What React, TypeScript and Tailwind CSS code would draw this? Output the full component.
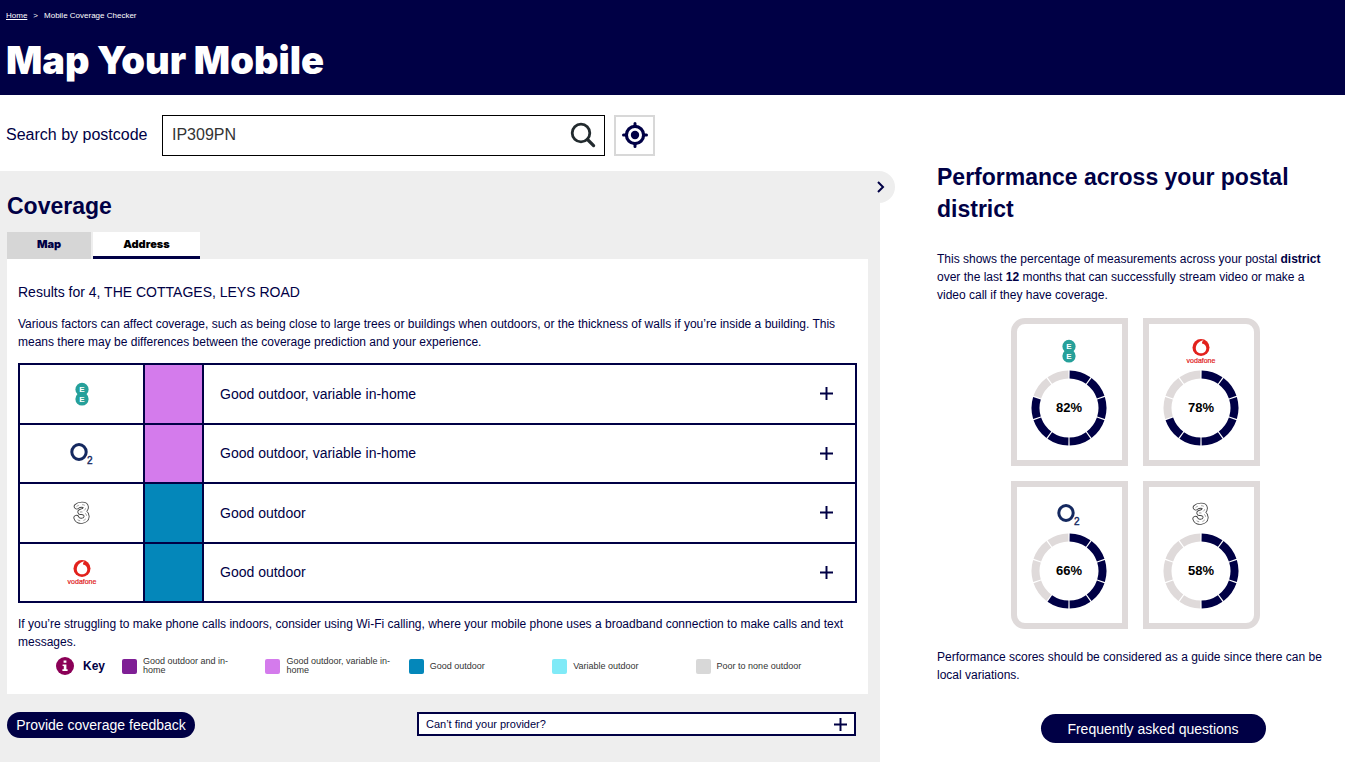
import type { ReactNode } from 'react';
import { clsx } from 'clsx';

type ProviderId = 'ee' | 'o2' | 'three' | 'vodafone';
type Level = 'indoor' | 'variableHome' | 'outdoor' | 'variableOutdoor' | 'poor';

const LEVEL_COLOURS: Record<Level, string> = {
  indoor: 'bg-[#7f1f95]',
  variableHome: 'bg-[#d47bec]',
  outdoor: 'bg-[#0487ba]',
  variableOutdoor: 'bg-[#80eaf7]',
  poor: 'bg-[#d8d8d8]',
};

const RESULTS: { provider: ProviderId; level: Level; label: string }[] = [
  { provider: 'ee', level: 'variableHome', label: 'Good outdoor, variable in-home' },
  { provider: 'o2', level: 'variableHome', label: 'Good outdoor, variable in-home' },
  { provider: 'three', level: 'outdoor', label: 'Good outdoor' },
  { provider: 'vodafone', level: 'outdoor', label: 'Good outdoor' },
];

const KEY_ITEMS: { level: Level; label: string }[] = [
  { level: 'indoor', label: 'Good outdoor and in-home' },
  { level: 'variableHome', label: 'Good outdoor, variable in-home' },
  { level: 'outdoor', label: 'Good outdoor' },
  { level: 'variableOutdoor', label: 'Variable outdoor' },
  { level: 'poor', label: 'Poor to none outdoor' },
];

const SCORES: { provider: ProviderId; percent: number; corner: string }[] = [
  { provider: 'ee', percent: 82, corner: 'rounded-tl-[14px]' },
  { provider: 'vodafone', percent: 78, corner: 'rounded-tr-[14px]' },
  { provider: 'o2', percent: 66, corner: 'rounded-bl-[14px]' },
  { provider: 'three', percent: 58, corner: 'rounded-br-[14px]' },
];

const THREE_PATH = 'M9.8 6.4 C12 4.2 18.6 3.8 18.8 7 C18.9 10 16.5 11.2 13.4 12 C17.2 11.6 19.8 13.6 19.6 16.6 C19.4 21.6 10.6 22.4 9.4 17.8';

function ProviderLogo({ provider }: { provider: ProviderId }) {
  switch (provider) {
    case 'ee':
      return (
        <svg width="30" height="26" viewBox="0 0 30 26" role="img" aria-label="EE">
          <circle cx="15" cy="8.4" r="6.6" fill="#26a09a" />
          <circle cx="15" cy="18" r="6.6" fill="#26a09a" />
          <text x="15" y="11" textAnchor="middle" fontSize="8" fontWeight="700" fill="#fff">E</text>
          <text x="15" y="21" textAnchor="middle" fontSize="8" fontWeight="700" fill="#fff">E</text>
        </svg>
      );
    case 'o2':
      return (
        <svg width="30" height="26" viewBox="0 0 30 26" role="img" aria-label="O2">
          <ellipse cx="12" cy="12" rx="7.2" ry="7.4" fill="none" stroke="#14285f" strokeWidth="3" />
          <text x="20" y="24" fontSize="10" fill="#14285f" stroke="#14285f" strokeWidth="0.4">2</text>
        </svg>
      );
    case 'three':
      return (
        <svg width="30" height="26" viewBox="0 0 30 26" role="img" aria-label="Three" fill="none" strokeLinecap="round" strokeLinejoin="round">
          <path d={THREE_PATH} stroke="#444" strokeWidth="6" />
          <path d={THREE_PATH} stroke="#fff" strokeWidth="4.2" />
          <path d={THREE_PATH} stroke="#888" strokeWidth="0.8" strokeDasharray="2 4" />
        </svg>
      );
    case 'vodafone':
      return (
        <svg width="30" height="26" viewBox="0 0 30 26" role="img" aria-label="Vodafone">
          <circle cx="15" cy="9.5" r="8.5" fill="#e2211c" />
          <path d="M17.8 2.2 C14 2.4 9.8 5.8 9.8 10.2 C9.8 13.2 12.2 15.2 15.1 15.2 C18 15.2 20.3 13.2 20.3 10.2 C20.3 7.4 18.4 6 16 5.4 C15.9 4 16.6 2.8 17.8 2.2 Z" fill="#fff" />
          <text x="15" y="25" textAnchor="middle" fontSize="7" fill="#e2211c" stroke="#e2211c" strokeWidth="0.2">vodafone</text>
        </svg>
      );
  }
}

function PlusIcon({ size = 13 }: { size?: number }) {
  return (
    <svg width={size} height={size} viewBox="0 0 12 12" stroke="#000045" strokeWidth="1.8" aria-hidden="true">
      <path d="M6 0V12M0 6H12" />
    </svg>
  );
}

function ScoreRing({ percent }: { percent: number }) {
  const filled = Math.floor(percent / 10);
  const point = (angle: number) => {
    const rad = ((angle - 90) * Math.PI) / 180;
    return `${38 + 33.5 * Math.cos(rad)} ${38 + 33.5 * Math.sin(rad)}`;
  };
  return (
    <svg width="76" height="76" viewBox="0 0 76 76" fill="none" role="img" aria-label={`${percent}%`}>
      {Array.from({ length: 10 }, (_, i) => (
        <path
          key={i}
          d={`M${point(i * 36 + 1)} A33.5 33.5 0 0 1 ${point(i * 36 + 35)}`}
          stroke={i < filled ? '#000045' : '#dfdada'}
          strokeWidth="8"
        />
      ))}
      <text x="38" y="42" textAnchor="middle" fontSize="13" fontWeight="700" fill="#000">{percent}%</text>
    </svg>
  );
}

function PillButton({ className, children }: { className?: string; children: ReactNode }) {
  return (
    <button type="button" className={clsx('rounded-full bg-[#000045] text-sm text-white', className)}>
      {children}
    </button>
  );
}

function SearchBar() {
  return (
    <form className="flex h-[76px] items-center pt-1 pl-1.5">
      <label htmlFor="postcode" className="w-[156px] text-base">Search by postcode</label>
      <div className="flex h-[41px] w-[443px] items-center border border-black pr-2">
        <input
          id="postcode"
          type="text"
          defaultValue="IP309PN"
          className="min-w-0 flex-1 px-[9px] text-base text-[#333] outline-none"
        />
        <button type="submit" aria-label="Search">
          <svg width="26" height="26" viewBox="0 0 26 26" fill="none" stroke="#222a2e" aria-hidden="true">
            <circle cx="11" cy="11" r="8.8" strokeWidth="2.8" />
            <path d="M17.5 17.5L23.6 23.6" strokeWidth="3.2" strokeLinecap="round" />
          </svg>
        </button>
      </div>
      <button type="button" aria-label="Use my location" className="ml-[9px] flex size-[41px] items-center justify-center border-2 border-[#d8d8d8]">
        <svg width="26" height="26" viewBox="0 0 26 26" fill="none" stroke="#000045" aria-hidden="true">
          <circle cx="13" cy="13" r="8.6" strokeWidth="3.2" />
          <circle cx="13" cy="13" r="4.2" fill="#000045" stroke="none" />
          <path d="M13 1.5V4M13 22V24.5M1.5 13H4M22 13H24.5" strokeWidth="3" strokeLinecap="round" />
        </svg>
      </button>
    </form>
  );
}

function ResultsTable() {
  return (
    <table className="mt-3 h-[240px] w-full table-fixed border-collapse border-2 border-[#000045] text-sm">
      <tbody>
        {RESULTS.map((row) => (
          <tr key={row.provider} className="border-2 border-[#000045]">
            <td className="w-[125px] border-2 border-[#000045]">
              <div className="flex justify-center">
                <ProviderLogo provider={row.provider} />
              </div>
            </td>
            <td className={clsx('w-[59px] border-2 border-[#000045]', LEVEL_COLOURS[row.level])} />
            <td className="pr-[22px] pl-4">
              <div className="flex items-center justify-between">
                {row.label}
                <button type="button" aria-label={`Show details: ${row.label}`}>
                  <PlusIcon />
                </button>
              </div>
            </td>
          </tr>
        ))}
      </tbody>
    </table>
  );
}

function CoverageKey() {
  return (
    <div className="mt-[3px] flex h-6 items-center pr-[18px] pl-[38px]">
      <svg width="18" height="18" viewBox="0 0 18 18" aria-hidden="true">
        <circle cx="9" cy="9" r="9" fill="#8b0057" />
        <path d="M7.6 3.6h2.8v2.2H7.6zM6.6 7.4h3.8v4.8h1.2V14H6.4v-1.8h1.4V9.1H6.6z" fill="#fff" />
      </svg>
      <h3 className="ml-[9px] w-[39px] text-xs font-bold">Key</h3>
      <ul className="grid flex-1 grid-cols-5">
        {KEY_ITEMS.map((item) => (
          <li key={item.level} className="flex items-center gap-1.5">
            <span className={clsx('size-[15px] shrink-0 rounded-xs', LEVEL_COLOURS[item.level])} />
            <span className="w-[106px] text-[9px] leading-[9px] text-[#333]">{item.label}</span>
          </li>
        ))}
      </ul>
    </div>
  );
}

function CoveragePanel() {
  return (
    <section className="relative bg-[#eee] pt-[19px] pr-3 pb-6 pl-[7px]">
      <button type="button" aria-label="Expand panel" className="absolute top-0 -right-[15px] flex h-8 w-8 items-center justify-center rounded-r-full bg-[#eee] pl-1">
        <svg width="8" height="12" viewBox="0 0 8 12" fill="none" stroke="#000045" strokeWidth="2" aria-hidden="true">
          <path d="M1 1L6 6L1 11" />
        </svg>
      </button>
      <h2 className="text-[23px] leading-8 font-bold">Coverage</h2>
      <div role="tablist" className="mt-2.5 flex gap-0.5 font-[Inter,sans-serif] text-[11px] font-black">
        <button type="button" role="tab" aria-selected="false" className="h-[27px] w-[84px] bg-[#d6d6d6] pb-0.5">Map</button>
        <button type="button" role="tab" aria-selected="true" className="h-[27px] w-[107px] border-b-3 border-[#000045] bg-white text-black">Address</button>
      </div>
      <div role="tabpanel" className="bg-white px-[11px] pt-[23px] pb-4 text-xs leading-[18px]">
        <p className="text-sm leading-5">Results for 4, THE COTTAGES, LEYS ROAD</p>
        <p className="mt-[13px]">
          Various factors can affect coverage, such as being close to large trees or buildings when outdoors, or the
          thickness of walls if you’re inside a building. This means there may be differences between the coverage
          prediction and your experience.
        </p>
        <ResultsTable />
        <p className="mt-3">
          If you’re struggling to make phone calls indoors, consider using Wi-Fi calling, where your mobile phone uses
          a broadband connection to make calls and text messages.
        </p>
        <CoverageKey />
      </div>
      <div className="mt-[18px] flex items-start justify-between pr-3">
        <PillButton className="h-[26px] w-[188px]">Provide coverage feedback</PillButton>
        <button type="button" className="flex h-6 w-[439px] items-center justify-between border-2 border-[#000045] bg-white px-[7px] text-[11px]">
          Can’t find your provider?
          <PlusIcon />
        </button>
      </div>
    </section>
  );
}

function PerformancePanel() {
  return (
    <aside className="w-[467px] shrink-0 pt-[66px] pr-5 pl-[57px] text-xs leading-[18px]">
      <h2 className="text-[23px] leading-8 font-bold">Performance across your postal district</h2>
      <p className="mt-[25px]">
        This shows the percentage of measurements across your postal <b>district</b> over the last <b>12</b> months
        that can successfully stream video or make a video call if they have coverage.
      </p>
      <div className="mt-3.5 flex justify-center pl-1.5">
        <ul className="grid w-[249px] grid-cols-2 gap-[15px]">
          {SCORES.map((score) => (
            <li
              key={score.provider}
              className={clsx('flex h-[148px] flex-col items-center gap-1.5 border-6 border-[#dfdada] pt-3.5', score.corner)}
            >
              <ProviderLogo provider={score.provider} />
              <ScoreRing percent={score.percent} />
            </li>
          ))}
        </ul>
      </div>
      <p className="mt-[19px]">
        Performance scores should be considered as a guide since there can be local variations.
      </p>
      <div className="mt-[30px] flex justify-center pl-[42px]">
        <PillButton className="h-[29px] w-[225px]">Frequently asked questions</PillButton>
      </div>
    </aside>
  );
}

export default function App() {
  return (
    <div className="min-h-screen bg-white font-['Liberation_Sans',Arial,sans-serif] text-[#000045]">
      <header className="mr-0.5 h-[95px] bg-[#000045] px-1.5 pt-2.5 text-white">
        <nav aria-label="Breadcrumb" className="flex gap-1.5 text-[8px] leading-3">
          <a href="#" className="underline">Home</a>
          <span>&gt;</span>
          <span>Mobile Coverage Checker</span>
        </nav>
        <h1 className="mt-[18px] font-[Inter,sans-serif] text-[38px] leading-10 font-black">Map Your Mobile</h1>
      </header>
      <main className="flex items-start">
        <div className="min-w-0 flex-1">
          <SearchBar />
          <CoveragePanel />
        </div>
        <PerformancePanel />
      </main>
    </div>
  );
}
